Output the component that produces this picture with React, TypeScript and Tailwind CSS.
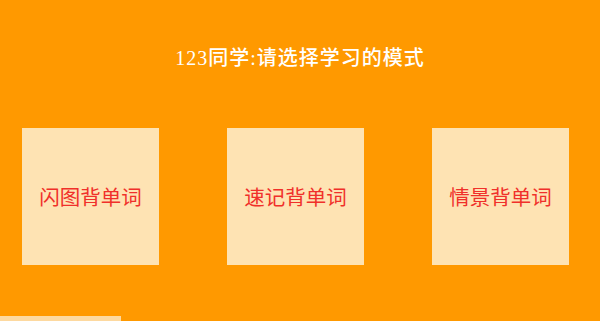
const MODES = ["闪图背单词", "速记背单词", "情景背单词"];

export default function App() {
  return (
    <div className="flex h-[321px] w-[600px] flex-col overflow-hidden bg-[#ff9900]">
      {/* Title */}
      <h1
        className="pt-[47px] text-center text-[20px] leading-[22px] font-medium tracking-[1px] text-white"
        style={{ fontFamily: '"Liberation Serif", "Noto Sans CJK SC", serif' }}
      >
        123同学:请选择学习的模式
      </h1>

      {/* Mode cards */}
      <div className="mt-[59px] flex gap-[68px] pl-[22px]">
        {MODES.map((m) => (
          <button
            key={m}
            className="flex h-[137px] w-[137px] items-center justify-center bg-[#fee3b3] text-[20.5px] text-[#f0302a]"
            style={{ fontFamily: '"Noto Sans CJK SC", sans-serif' }}
          >
            {m}
          </button>
        ))}
      </div>

      {/* Bottom strip */}
      <div className="mt-[51px] h-[5px] w-[121px] bg-[#fdd9a0]" />
    </div>
  );
}
